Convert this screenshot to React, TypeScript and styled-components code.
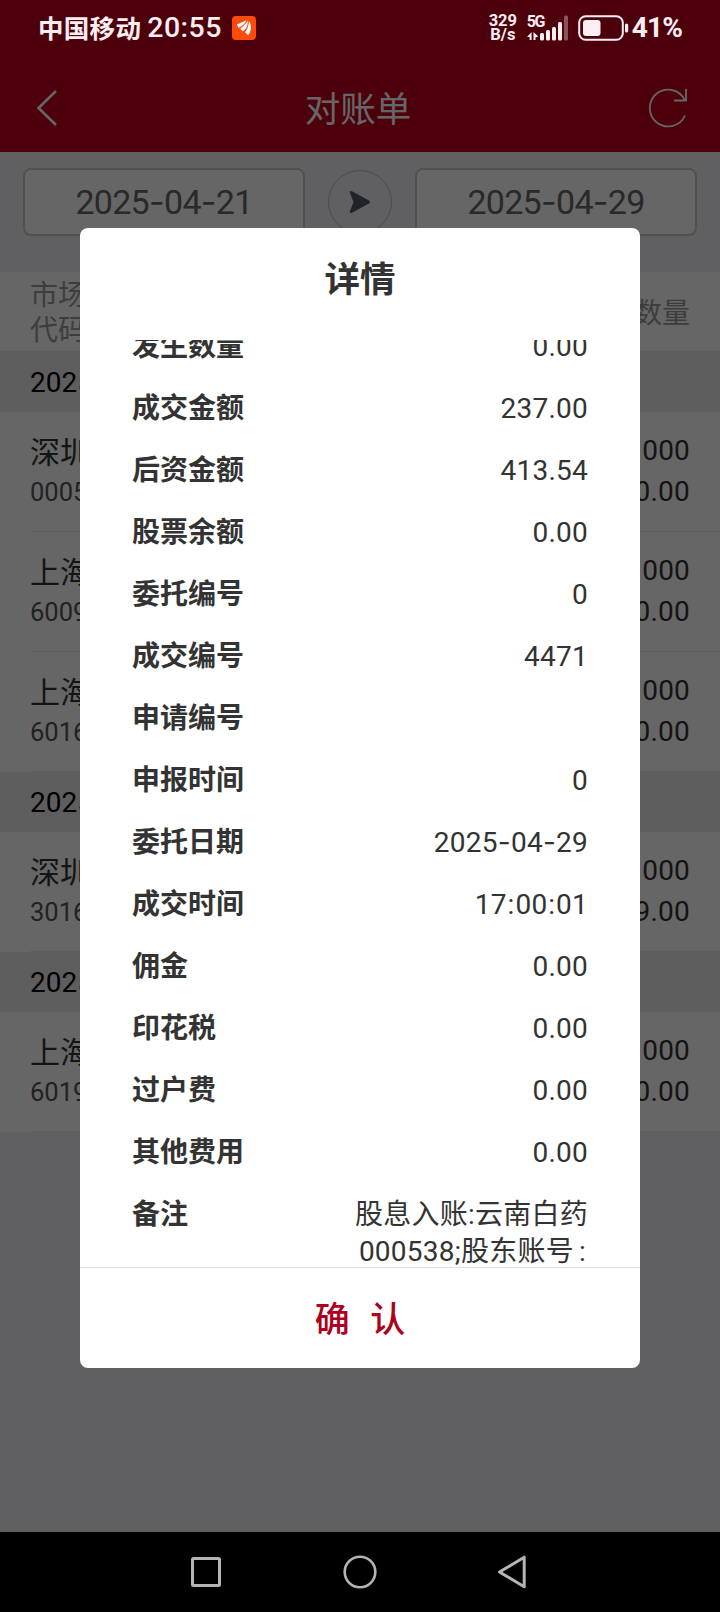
import React, { Fragment } from 'react';
import styled, { createGlobalStyle } from 'styled-components';

const GlobalStyle = createGlobalStyle`
  *, *::before, *::after { box-sizing: border-box; }
  body { margin: 0; background: #000; }
  button { border: 0; padding: 0; background: none; font: inherit; color: inherit; }
  svg { display: block; }
`;

const Phone = styled.div`
  position: relative;
  display: flex;
  flex-direction: column;
  width: 720px;
  height: 1612px;
  overflow: hidden;
  background: #f1f1f5;
  font-family: Roboto, 'Noto Sans CJK SC', sans-serif;
  font-size: 28px;
  color: #333;
`;

const StatusBar = styled.div`
  position: relative;
  z-index: 2;
  display: flex;
  justify-content: space-between;
  height: 56px;
  padding: 0 38px 0 38px;
  background: #4d000c;
  color: #fdeef1;
  font-weight: 500;
`;

const StatusGroup = styled.div`
  display: flex;
  align-items: center;
  height: 55px;
`;

const Carrier = styled.span`
  padding-bottom: 3px;
  font-size: 25.5px;
  font-weight: 700;
  letter-spacing: 0.3px;
`;

const Clock = styled.span`
  margin: 0 10px 0 6px;
  font-size: 28.5px;
  letter-spacing: 0.5px;
`;

const NetSpeed = styled.div`
  width: 30px;
  margin-right: 9px;
  font-size: 16.5px;
  font-weight: 700;
  line-height: 14px;
  text-align: center;
`;

const Signal = styled.div`
  position: relative;
  width: 42px;
  margin-right: 9px;
`;

const NetType = styled.span`
  position: absolute;
  left: 0;
  top: 0;
  font-size: 16px;
  font-weight: 700;
  line-height: 13px;
  letter-spacing: -1.6px;
`;

const BatteryLevel = styled.span`
  margin-left: 3px;
  font-size: 28px;
  font-weight: 700;
  letter-spacing: -0.9px;
`;

const TitleBar = styled.header`
  display: grid;
  grid-template-columns: 48px 1fr 48px;
  align-items: center;
  height: 96px;
  padding: 7px 28px 0 24px;
  background: #c0001e;
  color: #fff;
`;

const PageTitle = styled.h1`
  margin: -3px 0 0;
  font-size: 35.5px;
  font-weight: 400;
  text-align: center;
`;

const DateFilter = styled.div`
  display: flex;
  align-items: flex-start;
  gap: 23px;
  height: 120px;
  padding: 16px 23px 0;
`;

const DateField = styled.div`
  flex: 1;
  display: flex;
  align-items: center;
  justify-content: center;
  height: 68px;
  padding-bottom: 2px;
  border: 2px solid #c8c8c8;
  border-radius: 8px;
  background: #fff;
  color: #666;
  font-size: 34px;
  letter-spacing: -0.7px;
`;

const GoButton = styled.button`
  display: grid;
  place-items: center;
  width: 64px;
  height: 64px;
  margin-top: 2px;
  border: 1px solid #bbb;
  border-radius: 50%;
`;

const Dash = styled.span`
  font-family: Inter, sans-serif;
`;

const Colon = styled.span<{ $last?: boolean }>`
  margin: ${(p) => (p.$last ? '0 2px 0 5px' : '0 0.8px')};
`;

const TableHead = styled.div`
  display: flex;
  justify-content: space-between;
  align-items: center;
  height: 80px;
  padding: 3px 30px 0;
  border-bottom: 1px solid #ebebeb;
  background: #fff;
  color: #999;
  line-height: 35px;
`;

const GroupTitle = styled.div`
  display: flex;
  align-items: center;
  height: 60px;
  padding-left: 30px;
  background: #ebebeb;
  color: #000;
`;

const RecordRow = styled.div`
  padding-left: 30px;
  background: #fff;
`;

const RecordBody = styled.div`
  display: flex;
  justify-content: space-between;
  height: 120px;
  padding: 18px 30px 0 0;
  border-bottom: 1px solid #ebebeb;
  line-height: 41px;
`;

const Market = styled.div`
  padding-top: 2px;
  font-size: 30px;
  line-height: 41px;
`;

const Code = styled.div`
  font-size: 25.5px;
  line-height: 39px;
  color: #555;
`;

const Amount = styled.div`
  text-align: right;
  letter-spacing: 0.2px;
`;

const Shade = styled.div`
  position: absolute;
  inset: 0 0 80px;
  display: flex;
  justify-content: center;
  align-items: flex-start;
  padding-top: 228px;
  background: rgba(0, 0, 0, 0.6);
`;

const Dialog = styled.section`
  display: flex;
  flex-direction: column;
  width: 560px;
  height: 1140px;
  border-radius: 8px;
  background: #fff;
  overflow: hidden;
`;

const DialogTitle = styled.h2`
  height: 112px;
  margin: 0;
  font-size: 35.5px;
  line-height: 105px;
  text-align: center;
`;

const DetailScroll = styled.div`
  height: 927px;
  overflow: hidden;
`;

const DetailList = styled.dl`
  margin: -25px 0 0;
  padding: 0 52px;
`;

const DetailRow = styled.div`
  display: flex;
  justify-content: space-between;
  padding: 12.5px 0;
  line-height: 37px;
`;

const DetailLabel = styled.dt`
  font-weight: 700;
`;

const DetailValue = styled.dd`
  margin: 0;
  text-align: right;
  white-space: pre-line;
  letter-spacing: 0.25px;
`;

const ConfirmButton = styled.button`
  flex: 1;
  padding-bottom: 4px;
  border-top: 1px solid #e2e2e2;
  color: #b00020;
  font-size: 35px;
  font-weight: 500;
  word-spacing: 12px;
`;

const Records = styled.main`
  flex: 1;
`;

const NavBar = styled.nav`
  display: flex;
  justify-content: center;
  align-items: center;
  gap: 120px;
  height: 80px;
  background: #000;
`;

const records = [
  {
    date: '2025-04-29',
    rows: [
      { market: '深圳', code: '000538', qty: '0.000', price: '0.00' },
      { market: '上海', code: '600900', qty: '0.000', price: '0.00' },
      { market: '上海', code: '601600', qty: '0.000', price: '0.00' },
    ],
  },
  { date: '2025-04-28', rows: [{ market: '深圳', code: '301600', qty: '0.000', price: '9.00' }] },
  { date: '2025-04-25', rows: [{ market: '上海', code: '601900', qty: '0.000', price: '0.00' }] },
];

const details: [string, string][] = [
  ['发生数量', '0.00'],
  ['成交金额', '237.00'],
  ['后资金额', '413.54'],
  ['股票余额', '0.00'],
  ['委托编号', '0'],
  ['成交编号', '4471'],
  ['申请编号', ''],
  ['申报时间', '0'],
  ['委托日期', '2025-04-29'],
  ['成交时间', '17:00:01'],
  ['佣金', '0.00'],
  ['印花税', '0.00'],
  ['过户费', '0.00'],
  ['其他费用', '0.00'],
  ['备注', '股息入账:云南白药\n000538;股东账号:'],
];

// Dashes and colons between digits are set a little wider than the font's own.
function Digits({ value }: { value: string }) {
  return (
    <span>
      {value.split(/(-|:(?=\d)|:$)/).map((part, i, all) => {
        if (part === '-') return <Dash key={i}>-</Dash>;
        if (part === ':') return <Colon key={i} $last={i >= all.length - 2}>:</Colon>;
        return <Fragment key={i}>{part}</Fragment>;
      })}
    </span>
  );
}

function TimeDigits({ value }: { value: string }) {
  return (
    <span>
      {value.split(':').map((part, i) => (
        <Fragment key={i}>
          {i > 0 && <Colon>:</Colon>}
          {part}
        </Fragment>
      ))}
    </span>
  );
}

function StatusIcons() {
  return (
    <>
      <Signal>
        <NetType>5G</NetType>
        <svg width="42" height="26" viewBox="0 0 42 26" fill="currentColor">
          <path d="M0 22 4.600 17v8H2.600v-3zM6.500 17l4.800 4.600-2.800 1V25h-2z" />
          <rect x="13" y="18" width="4" height="7.500" rx="1.500" />
          <rect x="19" y="15" width="4" height="10.500" rx="1.500" />
          <rect x="25" y="12" width="4" height="13.500" rx="1.500" />
          <rect x="31" y="7" width="4" height="18.500" rx="1.500" />
          <rect x="37" y="0.500" width="4" height="25" rx="1.500" opacity="0.35" />
        </svg>
      </Signal>
      <svg width="51" height="26" viewBox="0 0 51 26" fill="currentColor">
        <rect x="1.200" y="1.200" width="43.600" height="23.600" rx="6.500" fill="none" stroke="currentColor" strokeWidth="2" />
        <rect x="5" y="5" width="17.500" height="16" rx="3" />
        <rect x="47" y="8.500" width="3.200" height="9" rx="1.600" />
      </svg>
    </>
  );
}

export default function App() {
  return (
    <Phone>
      <GlobalStyle />
      <StatusBar>
        <StatusGroup>
          <Carrier>中国移动</Carrier>
          <Clock>20:55</Clock>
          <svg width="24" height="24" viewBox="0 0 24 24">
            <rect width="24" height="24" rx="4" fill="#ff4a0c" />
            <g fill="#fff">
              <path d="M5 8.200C8 7.600 11 6 14.200 4.300 13.500 7.500 10 10.300 6.300 11.800z" />
              <path d="M8.200 12.600C11.500 10.600 13.600 8 15.600 4.800 16.200 9 14.500 12.800 10.800 15.400z" />
              <path d="M13 16.200C15.600 13 16.600 9.500 17 5 19.600 8.500 19.800 14.500 16.200 19.200z" />
            </g>
          </svg>
        </StatusGroup>
        <StatusGroup>
          <NetSpeed>
            329
            <br />
            B/s
          </NetSpeed>
          <StatusIcons />
          <BatteryLevel>41%</BatteryLevel>
        </StatusGroup>
      </StatusBar>
      <TitleBar>
        <svg width="48" height="40" viewBox="0 0 48 40" fill="none" stroke="currentColor" strokeWidth="2.600">
          <path d="M32 3 14.500 20 32 37" />
        </svg>
        <PageTitle>对账单</PageTitle>
        <svg width="48" height="40" viewBox="0 0 48 40" fill="none" stroke="currentColor" strokeWidth="1.800">
          <path d="M41 27.500A18.400 18.400 0 1 1 41 12.500M42 1V12.500H30" />
        </svg>
      </TitleBar>
      <DateFilter>
        <DateField><Digits value="2025-04-21" /></DateField>
        <GoButton aria-label="查询">
          <svg width="22" height="24" viewBox="0 0 22 24" fill="#4e5b68">
            <path d="M1 3Q0 0 3.500 1.500L20 10.500Q22 12 20 13.500L3.500 22.500Q0 24 1 21L4.500 12z" />
          </svg>
        </GoButton>
        <DateField><Digits value="2025-04-29" /></DateField>
      </DateFilter>
      <Records>
        <TableHead>
          <div>市场<br />代码</div>
          <div>数量</div>
        </TableHead>
        {records.map((group) => (
          <Fragment key={group.date}>
            <GroupTitle><Digits value={group.date} /></GroupTitle>
            {group.rows.map((row) => (
              <RecordRow key={row.code}>
                <RecordBody>
                  <div>
                    <Market>{row.market}</Market>
                    <Code>{row.code}</Code>
                  </div>
                  <Amount>
                    {row.qty}
                    <br />
                    {row.price}
                  </Amount>
                </RecordBody>
              </RecordRow>
            ))}
          </Fragment>
        ))}
      </Records>
      <Shade>
        <Dialog role="dialog">
          <DialogTitle>详情</DialogTitle>
          <DetailScroll>
            <DetailList>
              {details.map(([label, value]) => (
                <DetailRow key={label}>
                  <DetailLabel>{label}</DetailLabel>
                  <DetailValue>
                    {/^\d+:/.test(value) ? <TimeDigits value={value} /> : <Digits value={value} />}
                  </DetailValue>
                </DetailRow>
              ))}
            </DetailList>
          </DetailScroll>
          <ConfirmButton>确 认</ConfirmButton>
        </Dialog>
      </Shade>
      <NavBar>
        <svg width="34" height="34" viewBox="0 0 34 34" fill="none" stroke="#b4b4b4" strokeWidth="3">
          <rect x="3.500" y="3.500" width="27" height="27" rx="1" />
        </svg>
        <svg width="34" height="34" viewBox="0 0 34 34" fill="none" stroke="#b4b4b4" strokeWidth="2.600">
          <circle cx="17" cy="17" r="15.300" />
        </svg>
        <svg width="34" height="34" viewBox="0 0 34 34" fill="none" stroke="#b4b4b4" strokeWidth="3" strokeLinejoin="round">
          <path d="M27.200 2.200V31.800L2.500 17z" />
        </svg>
      </NavBar>
    </Phone>
  );
}
